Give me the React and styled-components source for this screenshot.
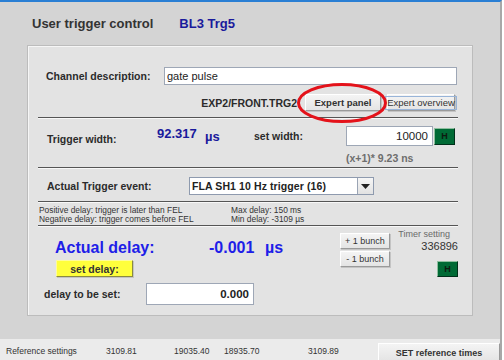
import styled, { createGlobalStyle } from "styled-components";

const GlobalStyle = createGlobalStyle`
  html, body {
    margin: 0;
    padding: 0;
    background: #ffffff;
  }
  body {
    font-family: "Liberation Sans", Arial, sans-serif;
    color: #2b2b2b;
  }
`;

const Window = styled.div`
  width: 502px;
  height: 360px;
  box-sizing: border-box;
  background: #d4d4d4;
  border-top: 2px solid #2a7fd4;
  border-right: 2px solid #a8a8a8;
  display: flex;
  flex-direction: column;
  overflow: hidden;
`;

const Header = styled.div`
  height: 43px;
  display: flex;
  align-items: center;
  padding-left: 32px;
  gap: 26px;
  font-size: 13px;
  font-weight: bold;
`;

const Title = styled.span`
  color: ${(p) => (p.$blue ? "#1a1a9c" : "#333333")};
`;

const Panel = styled.div`
  margin-left: 27px;
  width: 446px;
  height: 271px;
  box-sizing: border-box;
  background: #e3e3e3;
  border: 1px solid #bcbcbc;
  box-shadow: inset 1px 1px 0 #f6f6f6;
  padding: 21px 14px 0 10px;
  display: flex;
  flex-direction: column;
`;

const Row = styled.div`
  display: flex;
  align-items: center;
  height: ${(p) => p.$h}px;
  margin-top: ${(p) => p.$mt || 0}px;
`;

const DeviceRow = styled(Row)`
  justify-content: flex-end;
  padding-right: 3px;
`;

const Label = styled.span`
  display: inline-block;
  box-sizing: border-box;
  width: ${(p) => p.$w}px;
  padding-left: ${(p) => p.$pl || 0}px;
  font-size: 10.5px;
  font-weight: bold;
  color: #2b2b2b;
  white-space: nowrap;
  position: relative;
  top: ${(p) => p.$dy || 0}px;
`;

const Value = styled.span`
  display: inline-block;
  box-sizing: border-box;
  width: ${(p) => p.$w}px;
  padding-left: ${(p) => p.$pl || 0}px;
  font-size: ${(p) => p.$size || 13}px;
  font-weight: bold;
  color: ${(p) => p.$color || "#1a1a9c"};
  white-space: nowrap;
  position: relative;
  top: ${(p) => p.$dy || 0}px;
`;

const TextInput = styled.div`
  box-sizing: border-box;
  width: ${(p) => p.$w}px;
  height: ${(p) => p.$h}px;
  background: #ffffff;
  border: 1px solid #9ea7b6;
  display: flex;
  align-items: center;
  justify-content: ${(p) => (p.$right ? "flex-end" : "flex-start")};
  padding: 0 4px 0 2px;
  font-size: ${(p) => p.$size || 11}px;
  font-weight: ${(p) => (p.$bold ? "bold" : "normal")};
  color: #222;
`;

const Button = styled.div`
  box-sizing: border-box;
  width: ${(p) => p.$w}px;
  height: ${(p) => p.$h || 17}px;
  display: flex;
  align-items: center;
  justify-content: center;
  background: linear-gradient(#f4f4f4, #e4e4e4);
  border: 1px solid #ffffff;
  border-right-color: #9a9a9a;
  border-bottom-color: #9a9a9a;
  box-shadow: 1px 1px 0 #c4c4c4;
  font-size: ${(p) => p.$size || 9.5}px;
  font-weight: ${(p) => (p.$bold ? "bold" : "normal")};
  color: #333;
  white-space: nowrap;
`;

const FocusText = styled.span`
  border: 1px solid #98b4d8;
  padding: 0 1px;
  line-height: 12px;
`;

const YellowButton = styled(Button)`
  background: #ffff3c;
  border-color: #fffc9a #8a8a40 #8a8a40 #fffc9a;
  margin-left: 18px;
  margin-top: 5px;
  font-size: 10.5px;
  font-weight: bold;
  color: #333;
`;

const GreenButton = styled.div`
  box-sizing: border-box;
  width: 21px;
  height: ${(p) => p.$h || 17}px;
  background: #006a35;
  border: 1px solid #8fbf9f;
  border-right-color: #00301a;
  border-bottom-color: #00301a;
  display: flex;
  align-items: center;
  justify-content: center;
  font-size: 9px;
  font-weight: bold;
  color: #0d1a10;
  margin-left: ${(p) => p.$ml || 0}px;
  margin-top: ${(p) => p.$mt || 0}px;
`;

const Separator = styled.div`
  margin-top: ${(p) => p.$mt}px;
  border-top: 1px solid #555555;
  border-bottom: 1px solid #f8f8f8;
`;

const DeviceName = styled.span`
  font-size: 10.5px;
  font-weight: bold;
  color: #2b2b2b;
  margin-right: 8px;
`;

const Ring = styled.div`
  position: relative;
  margin-right: 6px;
`;

const RingSvg = styled.svg`
  position: absolute;
  left: -9px;
  top: -12px;
  pointer-events: none;
`;

const Hint = styled.div`
  margin-top: 6px;
  padding-left: 308px;
  font-size: 10.5px;
  font-weight: bold;
  color: #6e6e6e;
  line-height: 12px;
`;

const Select = styled.div`
  box-sizing: border-box;
  width: 185px;
  height: 18px;
  background: #ffffff;
  border: 1px solid #8e9aae;
  display: flex;
  align-items: stretch;
`;

const SelectText = styled.div`
  flex: 1;
  display: flex;
  align-items: center;
  padding-left: 2px;
  font-size: 10.5px;
  font-weight: bold;
  color: #222;
  letter-spacing: 0.1px;
`;

const SelectArrow = styled.div`
  width: 15px;
  border-left: 1px solid #9aa4b4;
  background: linear-gradient(#f6f6f6, #e2e2e2);
  display: flex;
  align-items: center;
  justify-content: center;
`;

const Info = styled.div`
  margin-top: 3px;
  padding-left: 1px;
  display: flex;
  font-size: 8.4px;
  line-height: 9px;
  color: #333;
`;

const InfoCol = styled.div`
  width: ${(p) => p.$w}px;
  white-space: nowrap;
`;

const DelaySection = styled.div`
  display: flex;
  flex: 1;
`;

const LeftCol = styled.div`
  width: 302px;
  display: flex;
  flex-direction: column;
`;

const BunchCol = styled.div`
  margin-top: 6px;
  display: flex;
  flex-direction: column;
  gap: 2px;
`;

const TimerCol = styled.div`
  flex: 1;
  display: flex;
  flex-direction: column;
  align-items: flex-end;
  padding-top: 2px;
`;

const TimerLabel = styled.div`
  font-size: 9px;
  color: #6a6a6a;
  line-height: 10px;
  margin-right: 8px;
`;

const TimerValue = styled.div`
  font-size: 11px;
  color: #333;
  line-height: 12px;
  margin-top: 1px;
`;

const StatusBar = styled.div`
  margin-top: auto;
  height: 21px;
  background: #ebebeb;
  display: grid;
  grid-template-columns: 100px 68px 50px 84px 70px 1fr;
  padding-left: 6px;
  align-items: center;
  font-size: 8.5px;
  color: #333;
`;

const StatusButton = styled(Button)`
  align-self: start;
  margin-top: 4px;
  height: 19px;
  font-size: 9px;
  font-weight: bold;
`;

export default function App() {
  return (
    <>
      <GlobalStyle />
      <Window>
        <Header>
          <Title>User trigger control</Title>
          <Title $blue>BL3 Trg5</Title>
        </Header>
        <Panel>
          <Row $h={18}>
            <Label $w={126} $pl={8}>
              Channel description:
            </Label>
            <TextInput $w={293} $h={18}>
              gate pulse
            </TextInput>
          </Row>

          <DeviceRow $h={17} $mt={9}>
            <DeviceName>EXP2/FRONT.TRG2</DeviceName>
            <Ring>
              <Button $w={76} $bold>Expert panel</Button>
              <RingSvg width="92" height="42" viewBox="0 0 92 42">
                <ellipse cx="46" cy="21" rx="43.5" ry="18.5" fill="none" stroke="#e4121a" strokeWidth="3" />
              </RingSvg>
            </Ring>
            <Button $w={68}>
              <FocusText>Expert overview</FocusText>
            </Button>
          </DeviceRow>

          <Separator $mt={6} />

          <Row $h={20} $mt={7}>
            <Label $w={119} $pl={9} $dy={3}>
              Trigger width:
            </Label>
            <Value $w={48} $dy={-3}>92.317</Value>
            <Value $w={49}>µs</Value>
            <Label $w={92}>set width:</Label>
            <TextInput $w={87} $h={20} $right $size={11.5}>
              10000
            </TextInput>
            <GreenButton $ml={1}>H</GreenButton>
          </Row>
          <Hint>(x+1)* 9.23 ns</Hint>

          <Separator $mt={3} />

          <Row $h={18} $mt={8}>
            <Label $w={151} $pl={9}>
              Actual Trigger event:
            </Label>
            <Select>
              <SelectText>FLA SH1 10 Hz trigger (16)</SelectText>
              <SelectArrow>
                <svg width="9" height="5" viewBox="0 0 9 5">
                  <path d="M0 0 L9 0 L4.5 5 Z" fill="#222" />
                </svg>
              </SelectArrow>
            </Select>
          </Row>

          <Separator $mt={6} />

          <Info>
            <InfoCol $w={192}>
              <div>Positive delay: trigger is later than FEL</div>
              <div>Negative delay: trigger comes before FEL</div>
            </InfoCol>
            <InfoCol $w={120}>
              <div>Max delay: 150 ms</div>
              <div>Min delay: -3109 µs</div>
            </InfoCol>
          </Info>

          <Separator $mt={1} />

          <DelaySection>
            <LeftCol>
              <Row $h={14} $mt={14}>
                <Value $w={171} $pl={17} $size={16} $color="#1e1ee8">
                  Actual delay:
                </Value>
                <Value $w={56} $size={16} $color="#1e1ee8">-0.001</Value>
                <Value $w={30} $size={16} $color="#1e1ee8">µs</Value>
              </Row>
              <YellowButton $w={77}>set delay:</YellowButton>
              <Row $h={22} $mt={6}>
                <Label $w={108} $pl={6}>
                  delay to be set:
                </Label>
                <TextInput $w={108} $h={22} $right $bold $size={11.5}>
                  0.000
                </TextInput>
              </Row>
            </LeftCol>
            <BunchCol>
              <Button $w={50} $h={16} $size={9}>+ 1 bunch</Button>
              <Button $w={50} $h={16} $size={9}>- 1 bunch</Button>
            </BunchCol>
            <TimerCol>
              <TimerLabel>Timer setting</TimerLabel>
              <TimerValue>336896</TimerValue>
              <GreenButton $h={16} $mt={9}>H</GreenButton>
            </TimerCol>
          </DelaySection>
        </Panel>

        <StatusBar>
          <span>Reference settings</span>
          <span>3109.81</span>
          <span>19035.40</span>
          <span>18935.70</span>
          <span>3109.89</span>
          <StatusButton $w={122}>SET reference times</StatusButton>
        </StatusBar>
      </Window>
    </>
  );
}
